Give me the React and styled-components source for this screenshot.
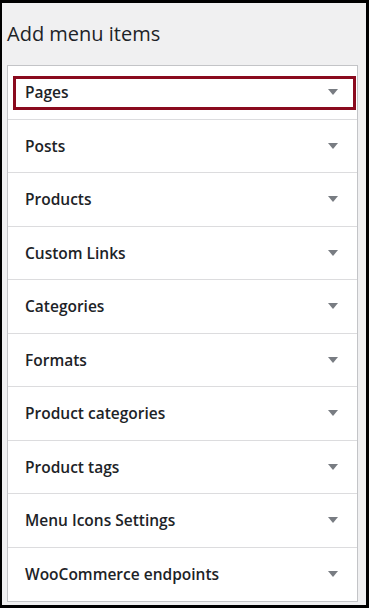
import React from 'react';
import styled, { createGlobalStyle } from 'styled-components';

const GlobalStyle = createGlobalStyle`
  html, body {
    margin: 0;
    padding: 0;
    background: #000;
  }
  * {
    box-sizing: border-box;
  }
`;

const items = [
  'Pages',
  'Posts',
  'Products',
  'Custom Links',
  'Categories',
  'Formats',
  'Product categories',
  'Product tags',
  'Menu Icons Settings',
  'WooCommerce endpoints',
];

const Frame = styled.div`
  width: 369px;
  height: 608px;
  border-style: solid;
  border-color: #000;
  border-width: 3px 3px 3px 2px;
  background: #f0f0f1;
  display: flex;
  flex-direction: column;
  font-family: 'Open Sans', 'Noto Sans', sans-serif;
`;

const Title = styled.h2`
  margin: 0;
  padding: 17px 0 0 5px;
  height: 62px;
  font-size: 20px;
  line-height: 27px;
  font-weight: 500;
  color: #1d2327;
`;

const Panel = styled.div`
  margin: 0 8px 0 5px;
  background: #fff;
  border: 1px solid #c3c4c7;
  display: flex;
  flex-direction: column;
`;

const Row = styled.div`
  position: relative;
  height: 53.5px;
  display: flex;
  align-items: center;
  justify-content: space-between;
  padding: 0 19px 0 17px;
  border-bottom: ${(p) => (p.$last ? 'none' : '1px solid #dcdcde')};
  font-size: 15.5px;
  font-weight: 600;
  color: #1d2327;
`;

const Highlight = styled.div`
  position: absolute;
  left: 5px;
  right: 1px;
  top: 10px;
  height: 34px;
  border: 3px solid #8a0a1e;
  pointer-events: none;
`;

const Arrow = styled.span`
  width: 0;
  height: 0;
  border-left: 5px solid transparent;
  border-right: 5px solid transparent;
  border-top: 6px solid #787c82;
`;

export default function App() {
  return (
    <>
      <GlobalStyle />
      <Frame>
        <Title>Add menu items</Title>
        <Panel>
          {items.map((label, i) => (
            <Row key={label} $last={i === items.length - 1}>
              {i === 0 && <Highlight />}
              <span>{label}</span>
              <Arrow />
            </Row>
          ))}
        </Panel>
      </Frame>
    </>
  );
}
